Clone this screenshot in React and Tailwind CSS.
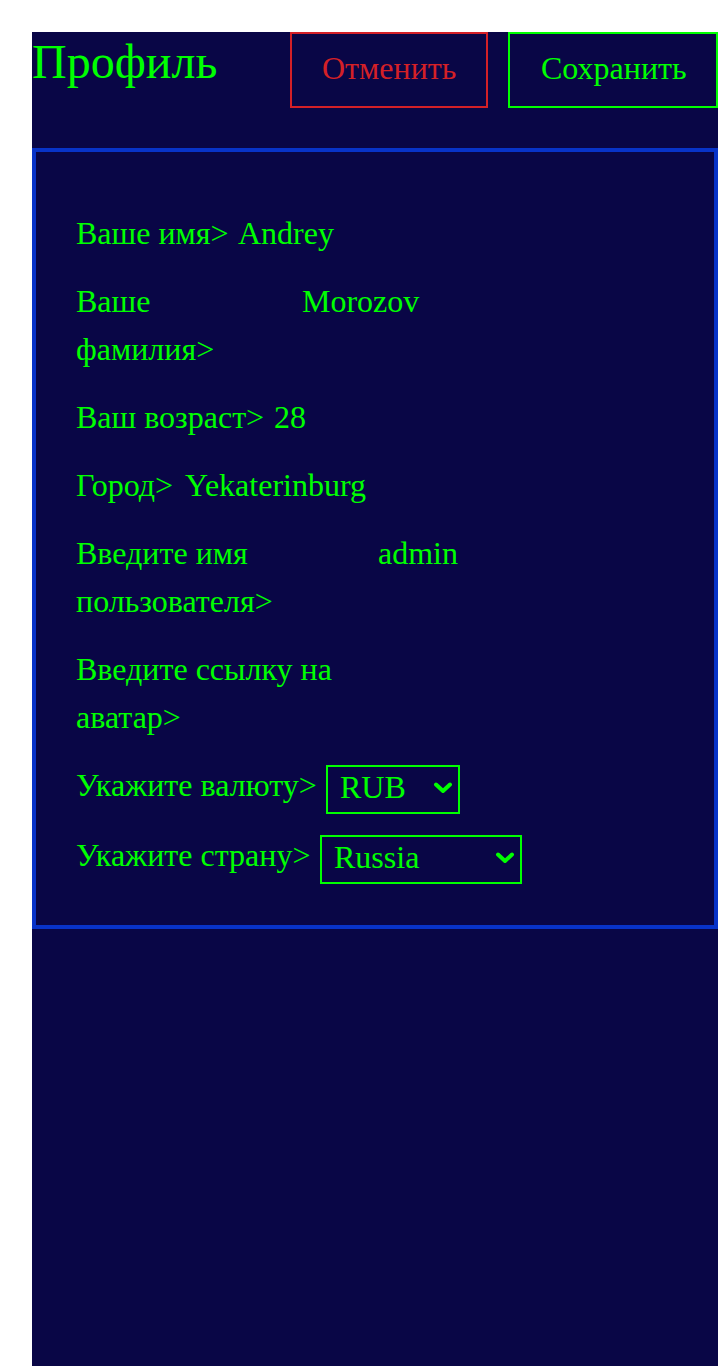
import React from "react";

const serif = { fontFamily: '"Liberation Serif", "Times New Roman", serif' };

function Chevron() {
  return (
    <svg width="20" height="12" viewBox="0 0 20 12" className="shrink-0 mb-[4px]">
      <path d="M3 2.5 L10 9 L17 2.5" fill="none" stroke="#00ff00" strokeWidth="4" strokeLinejoin="round" strokeLinecap="round" />
    </svg>
  );
}

function TextRow({ label, value, labelW }) {
  return (
    <div className="flex items-start">
      <span className={`${labelW} shrink-0`}>{label}</span>
      {value && <span>{value}</span>}
    </div>
  );
}

function SelectRow({ label, value, labelW, selW }) {
  return (
    <div className="flex items-start">
      <span className={`${labelW} shrink-0`}>{label}</span>
      <div className={`${selW} mt-[4px] h-[49px] border-2 border-[#00ff00] flex items-center justify-between pl-[12px] pr-[5px] leading-[36px]`}>
        <span className="mb-[6px]">{value}</span>
        <Chevron />
      </div>
    </div>
  );
}

export default function App() {
  return (
    <div className="bg-white pl-8 pt-8" style={serif}>
      <div className="bg-[#090646] h-[1334px] flex flex-col">
        <div className="flex justify-between items-start">
          <h1 className="pt-[2px] text-[48px] leading-[1.15] text-[#00ff00]">Профиль</h1>
          <div className="flex gap-5">
            <button className="border-2 border-[#d42027] text-[#d42027] text-[32px] leading-[48px] pt-[10px] pb-[14px] pl-[30px] text-left w-[198px]">
              Отменить
            </button>
            <button className="border-2 border-[#00ff00] text-[#00ff00] text-[32px] leading-[48px] pt-[10px] pb-[14px] pl-[31px] text-left w-[210px]">
              Сохранить
            </button>
          </div>
        </div>
        <div className="mt-10 border-4 border-[#0833c8] pl-10 pr-10 pt-[57px] pb-[41px] text-[#00ff00] text-[32px] leading-[48px] flex flex-col gap-5">
          <TextRow label="Ваше имя>" value="Andrey" labelW="w-[162px]" />
          <TextRow label={<>Ваше<br />фамилия&gt;</>} value="Morozov" labelW="w-[226px]" />
          <TextRow label="Ваш возраст>" value="28" labelW="w-[198px]" />
          <TextRow label="Город>" value="Yekaterinburg" labelW="w-[109px]" />
          <TextRow label={<>Введите имя<br />пользователя&gt;</>} value="admin" labelW="w-[302px]" />
          <TextRow label={<>Введите ссылку на<br />аватар&gt;</>} labelW="w-[302px]" />
          <SelectRow label="Укажите валюту>" value="RUB" labelW="w-[250px]" selW="w-[134px]" />
          <div className="-mt-[3px]">
            <SelectRow label="Укажите страну>" value="Russia" labelW="w-[244px]" selW="w-[202px]" />
          </div>
        </div>
      </div>
    </div>
  );
}
